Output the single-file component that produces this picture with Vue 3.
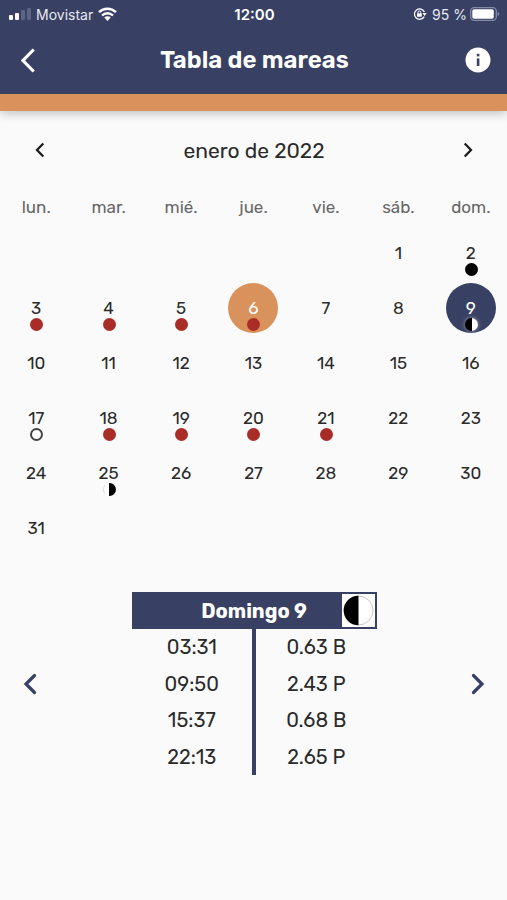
<script setup>
import { computed, ref } from "vue";

const weekdays = ["lun.", "mar.", "mié.", "jue.", "vie.", "sáb.", "dom."];
const names = ["Lunes", "Martes", "Miércoles", "Jueves", "Viernes", "Sábado", "Domingo"];

// 1 January 2022 is a Saturday
const offset = 5;
const today = 6;
const selected = ref(9);

const marks = {
  2: "new",
  3: "red",
  4: "red",
  5: "red",
  6: "red",
  9: "first",
  17: "full",
  18: "red",
  19: "red",
  20: "red",
  21: "red",
  25: "last",
};

const tides = [
  { time: "03:31", height: "0.63 B" },
  { time: "09:50", height: "2.43 P" },
  { time: "15:37", height: "0.68 B" },
  { time: "22:13", height: "2.65 P" },
];

const dayTitle = computed(
  () => `${names[(selected.value + offset - 1) % 7]} ${selected.value}`
);

const moveDay = (step) => {
  selected.value = Math.min(31, Math.max(1, selected.value + step));
};
</script>

<template>
  <div class="app">
    <header class="top">
      <div class="status">
        <div class="status-side">
          <svg width="22" height="12" viewBox="0 0 22 12">
            <rect x="0" y="7" width="4" height="5" rx="1" fill="#fff" />
            <rect x="6" y="5" width="4" height="7" rx="1" fill="#fff" />
            <rect x="12" y="2" width="4" height="10" rx="1" fill="#5d6585" />
            <rect x="18" y="0" width="4" height="12" rx="1" fill="#5d6585" />
          </svg>
          <span>Movistar</span>
          <svg width="19" height="14" viewBox="0 0 19 14">
            <g fill="none" stroke="#fff" stroke-width="2.4">
              <path d="M1 5.2a12.2 12.2 0 0 1 17 0" />
              <path d="M4 8.5a7.8 7.8 0 0 1 11 0" />
            </g>
            <path d="M6.3 10.6a4.6 4.6 0 0 1 6.4 0L9.5 13.9z" fill="#fff" />
          </svg>
        </div>
        <strong class="clock">12:00</strong>
        <div class="status-side right">
          <svg width="14" height="14" viewBox="0 0 14 14">
            <path
              d="M11.2 9.6A5.2 5.2 0 1 1 11.4 5"
              fill="none"
              stroke="#fff"
              stroke-width="1.3"
            />
            <path d="M9.4 6h4.4l-2.2 3z" fill="#fff" />
            <rect x="4" y="6.2" width="4.8" height="3.6" rx="0.6" fill="#fff" />
            <path d="M5 6.5V5.3a1.4 1.4 0 0 1 2.8 0v1.2" fill="none" stroke="#fff" />
          </svg>
          <span class="percent">95 %</span>
          <svg width="30" height="14" viewBox="0 0 30 14">
            <rect
              x="0.7"
              y="0.7"
              width="25.6"
              height="12.6"
              rx="3.5"
              fill="none"
              stroke="#858ba5"
              stroke-width="1.3"
            />
            <rect x="2.3" y="2.3" width="21.5" height="9.4" rx="1.8" fill="#fff" />
            <path d="M27.6 4.8q3.4 2.2 0 4.4z" fill="#858ba5" />
          </svg>
        </div>
      </div>

      <div class="nav">
        <button class="icon-btn" aria-label="Volver">
          <svg width="26" height="26" viewBox="0 0 26 26">
            <path d="M15.7 2.5 5 13.5l10.7 11" fill="none" stroke="#fff" stroke-width="3.2" />
          </svg>
        </button>
        <h1>Tabla de mareas</h1>
        <button class="icon-btn" aria-label="Información">
          <svg width="26" height="26" viewBox="0 0 26 26">
            <circle cx="13" cy="13" r="12.5" fill="#fff" />
            <rect x="11.8" y="6.8" width="2.6" height="2.6" fill="#384164" />
            <rect x="11.8" y="11.4" width="2.6" height="7.6" fill="#384164" />
          </svg>
        </button>
      </div>
    </header>

    <main>
      <div class="month">
        <button class="icon-btn" aria-label="Mes anterior">
          <svg width="10" height="16" viewBox="0 0 10 16">
            <path d="M8.3 1.5 2 8l6.3 6.5" fill="none" stroke="#1c1c1c" stroke-width="2.3" />
          </svg>
        </button>
        <h2>enero de 2022</h2>
        <button class="icon-btn" aria-label="Mes siguiente">
          <svg width="10" height="16" viewBox="0 0 10 16">
            <path d="M1.7 1.5 8 8l-6.3 6.5" fill="none" stroke="#1c1c1c" stroke-width="2.3" />
          </svg>
        </button>
      </div>

      <div class="week">
        <span v-for="name in weekdays" :key="name">{{ name }}</span>
      </div>

      <div class="days">
        <span v-for="n in offset" :key="'e' + n" />
        <button
          v-for="day in 31"
          :key="day"
          class="day"
          :class="{ today: day === today, selected: day === selected }"
          @click="selected = day"
        >
          {{ day }}
          <i v-if="marks[day]" class="mark" :class="marks[day]" />
        </button>
      </div>

      <section class="tides">
        <button class="icon-btn" aria-label="Día anterior" @click="moveDay(-1)">
          <svg width="14" height="22" viewBox="0 0 14 22">
            <path
              d="M11.5 2.5 3 11l8.5 8.5"
              fill="none"
              stroke="#384164"
              stroke-width="3.2"
              stroke-linecap="round"
            />
          </svg>
        </button>
        <table>
          <thead>
            <tr>
              <th colspan="2">
                {{ dayTitle }}
                <svg class="moon" width="33" height="33" viewBox="0 0 33 33">
                  <rect width="33" height="33" fill="#fff" />
                  <circle cx="16.5" cy="16.5" r="14.5" fill="#fff" stroke="#c8c8c0" />
                  <path d="M16.5 1.7a14.8 14.8 0 0 0 0 29.6z" fill="#000" />
                </svg>
              </th>
            </tr>
          </thead>
          <tbody>
            <tr v-for="tide in tides" :key="tide.time">
              <td>{{ tide.time }}</td>
              <td>{{ tide.height }}</td>
            </tr>
          </tbody>
        </table>
        <button class="icon-btn" aria-label="Día siguiente" @click="moveDay(1)">
          <svg width="14" height="22" viewBox="0 0 14 22">
            <path
              d="M2.5 2.5 11 11l-8.5 8.5"
              fill="none"
              stroke="#384164"
              stroke-width="3.2"
              stroke-linecap="round"
            />
          </svg>
        </button>
      </section>
    </main>
  </div>
</template>

<style>
body {
  margin: 0;
  background: #fafafa;
}
</style>

<style scoped>
.app {
  min-height: 100vh;
  background: #fafafa;
  color: #2b2b2b;
  font-family: Rubik, Inter, "Liberation Sans", sans-serif;
}

.top {
  background: #384164;
  color: #fff;
  border-bottom: 17px solid #d9925c;
  box-shadow: 0 2px 10px rgba(0, 0, 0, 0.25);
}

.status {
  display: grid;
  grid-template-columns: 1fr auto 1fr;
  align-items: center;
  height: 28px;
  padding: 0 7px 0 9px;
  font-family: Inter, "Liberation Sans", sans-serif;
  font-size: 14px;
  color: #e6e8ef;
}

.status-side {
  display: flex;
  align-items: center;
  gap: 5px;
}

.status-side.right {
  justify-content: flex-end;
  gap: 3px;
}

.percent {
  margin-left: 2px;
}

.clock {
  font-size: 15px;
  font-weight: 600;
  color: #fff;
}

.nav {
  display: flex;
  align-items: center;
  justify-content: space-between;
  box-sizing: border-box;
  height: 66px;
  padding: 0 16px 2px 18px;
}

h1 {
  margin: 0;
  font-size: 24px;
  font-weight: 600;
}

.icon-btn {
  display: flex;
  padding: 0;
  border: none;
  background: none;
  cursor: pointer;
}

.month {
  display: flex;
  align-items: center;
  justify-content: space-between;
  height: 78px;
  padding: 0 34px 0 35px;
}

h2 {
  margin: 0;
  font-size: 21px;
  font-weight: 400;
}

.week,
.days {
  display: grid;
  grid-template-columns: repeat(7, 1fr);
  justify-items: center;
}

.week {
  height: 36px;
  line-height: 37px;
  font-size: 17px;
  color: #666;
}

.days {
  grid-auto-rows: 55px;
  align-items: center;
}

.day {
  position: relative;
  width: 50px;
  height: 50px;
  padding: 0;
  border: none;
  border-radius: 50%;
  background: none;
  color: inherit;
  font-family: inherit;
  font-size: 17px;
  cursor: pointer;
}

.day.today {
  background: #d9925c;
  color: #fff;
}

.day.selected {
  background: #384164;
  color: #fff;
}

.mark {
  box-sizing: border-box;
  position: absolute;
  bottom: 2px;
  left: 50%;
  width: 13px;
  height: 13px;
  margin-left: -6px;
  border-radius: 50%;
}

.mark.red {
  background: #a92d26;
}

.mark.new {
  background: #000;
}

.mark.full {
  border: 2px solid #444;
  background: #fff;
}

.mark.first {
  background: linear-gradient(90deg, #000 50%, #fff 50%);
  box-shadow: 0 0 4px rgba(255, 255, 255, 0.5);
}

.mark.last {
  border: 1px solid transparent;
  background: linear-gradient(90deg, #fff 50%, #000 50%) border-box;
  border-left-color: #ddd;
}

.tides {
  display: flex;
  align-items: center;
  justify-content: space-between;
  margin-top: 37px;
  padding: 0 22px 0 23px;
}

table {
  width: 53%;
  max-width: 420px;
  min-width: 245px;
  height: 183px;
  table-layout: fixed;
  border-collapse: collapse;
  font-size: 20px;
  text-align: center;
}

th {
  position: relative;
  height: 37px;
  padding: 0;
  background: #384164;
  color: #fff;
  font-weight: 700;
}

.moon {
  position: absolute;
  top: 2px;
  right: 2px;
}

td {
  padding: 0;
}

td:first-child {
  border-right: 4px solid #384164;
}
</style>
